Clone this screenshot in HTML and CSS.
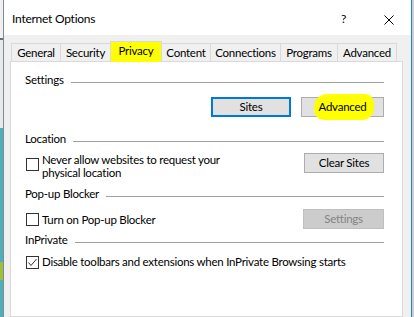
FILE: index.html
```html
<!DOCTYPE html>
<html>
<head>
<meta charset="utf-8">
<link rel="stylesheet" href="styles.css">
</head>
<body>
<div class="screen">
  <div class="bg-left"></div>
  <div class="window">
    <div class="titlebar">
      <span class="title">Internet Options</span>
      <span class="help">?</span>
      <svg class="close" width="10" height="10" viewBox="0 0 10 10"><path d="M0.5 0.5L9.5 9.5M9.5 0.5L0.5 9.5" stroke="#000" stroke-width="1" fill="none"/></svg>
    </div>
    <div class="client">
      <div class="tabs">
        <div class="tab tab-general">General</div>
        <div class="tab tab-security">Security</div>
        <div class="tab tab-privacy selected">Privacy</div>
        <div class="tab tab-content">Content</div>
        <div class="tab tab-connections">Connections</div>
        <div class="tab tab-programs">Programs</div>
        <div class="tab tab-advanced">Advanced</div>
      </div>
      <div class="panel">
        <div class="group-head head-settings"><span>Settings</span><span class="rule"></span></div>
        <div class="btn-row">
          <button class="btn btn-sites default">Sites</button>
          <button class="btn btn-adv"><span class="marker"></span><span class="lbl">Advanced</span></button>
        </div>

        <div class="group-head head-location"><span>Location</span><span class="rule"></span></div>
        <div class="opt-row row-location">
          <label class="check"><span class="box"></span><span class="txt">Never allow websites to request your<br>physical location</span></label>
          <button class="btn">Clear Sites</button>
        </div>

        <div class="group-head head-popup"><span>Pop-up Blocker</span><span class="rule"></span></div>
        <div class="opt-row row-popup">
          <label class="check"><span class="box"></span><span class="txt">Turn on Pop-up Blocker</span></label>
          <button class="btn disabled">Settings</button>
        </div>

        <div class="group-head head-inprivate"><span>InPrivate</span><span class="rule"></span></div>
        <div class="opt-row row-inprivate">
          <label class="check"><span class="box checked"><svg width="11" height="11" viewBox="0 0 11 11"><path d="M1.5 5.5L4 8.5L9.5 2" stroke="#333" stroke-width="1" fill="none"/></svg></span><span class="txt">Disable toolbars and extensions when InPrivate Browsing starts</span></label>
        </div>
      </div>
    </div>
  </div>
  <div class="bg-right"></div>
</div>
</body>
</html>
```
FILE: styles.css
```css
* { box-sizing: border-box; }
html, body { margin: 0; padding: 0; }
body {
  width: 414px;
  height: 317px;
  overflow: hidden;
  font-family: Lato, "Noto Sans", sans-serif;
  font-size: 11.5px;
  letter-spacing: -0.25px;
  color: #000;
}
.screen {
  display: flex;
  width: 414px;
  height: 317px;
}
.bg-left {
  width: 3px;
  background: linear-gradient(to bottom, #f0f0f0 0 38px, #6d6d6d 38px 40px, #e9e9e9 40px 128px, #4cb0b8 128px 262px, #9fbf3a 262px 280px, #4cb0b8 280px 100%);
}
.bg-right {
  width: 2px;
  background: #cfcfcf;
}
.window {
  width: 409px;
  display: flex;
  flex-direction: column;
  border-left: 1px solid #7f8a96;
  border-right: 1px solid #1883d7;
  background: #f0f0f0;
}
.titlebar {
  height: 35px;
  flex: none;
  background: #fff;
  display: flex;
  align-items: flex-start;
  padding: 11px 17px 0 8px;
  line-height: 16px;
}
.title { flex: 1; font-size: 12px; }
.help { margin-right: 38px; font-size: 12px; }
.close { margin-top: 4px; }
.client {
  flex: 1;
  display: flex;
  flex-direction: column;
  padding: 6px 8px 0 6px;
}
.tabs {
  display: flex;
  align-items: flex-end;
  height: 20px;
  padding-left: 1px;
}
.tab {
  height: 18px;
  border: 1px solid #d9d9d9;
  border-bottom: none;
  background: #f0f0f0;
  line-height: 17px;
  text-align: center;
  white-space: nowrap;
  margin-left: -1px;
}
.tab:first-child { margin-left: 0; }
.tab-general { width: 50px; }
.tab-security { width: 51px; }
.tab-privacy { width: 52px; }
.tab-content { width: 50px; }
.tab-connections { width: 71px; }
.tab-programs { width: 58px; }
.tab-advanced { width: 60px; }
.tab.selected {
  height: 21px;
  margin-bottom: -1px;
  position: relative;
  z-index: 1;
  background: #ffff00;
}
.panel {
  flex: 1;
  background: #fff;
  border: 1px solid #d9d9d9;
  padding: 10px 18px 0 14px;
  display: flex;
  flex-direction: column;
}
.group-head {
  display: flex;
  height: 16px;
  line-height: 16px;
  white-space: nowrap;
}
.rule {
  flex: 1;
  height: 1px;
  background: #a0a0a0;
  margin: 10px 0 0 7px;
}
.btn {
  font: inherit;
  letter-spacing: inherit;
  color: #000;
  width: 80px;
  height: 20px;
  padding: 0;
  background: #e1e1e1;
  border: 1px solid #adadad;
  line-height: 18px;
  text-align: center;
  border-radius: 0;
  flex: none;
}
.btn.default {
  border: 2px solid #0078d7;
  line-height: 16px;
}
.btn.disabled {
  background: #cccccc;
  border-color: #bfbfbf;
  color: #838383;
  width: 81px;
}
.btn-row {
  display: flex;
  justify-content: flex-end;
  gap: 10px;
  margin-top: 9px;
}
.btn-adv {
  width: 83px;
  position: relative;
}
.btn-adv .marker {
  position: absolute;
  left: 12px;
  top: -4px;
  width: 60px;
  height: 26px;
  background: #ffff00;
  border-radius: 13px 9px 12px 10px;
}
.btn-adv .lbl { position: relative; }
.head-location { margin-top: 14px; }
.head-popup { margin-top: 7px; }
.head-inprivate { margin-top: 3px; }
.opt-row {
  display: flex;
  justify-content: space-between;
  align-items: flex-start;
}
.row-location { margin-top: 6px; }
.row-popup { margin-top: 7px; align-items: center; }
.row-inprivate { margin-top: 7px; }
.check {
  display: flex;
  align-items: flex-start;
  line-height: 13px;
}
.box {
  width: 13px;
  height: 13px;
  border: 1px solid #333;
  background: #fff;
  margin: 0 3px 0 1px;
  flex: none;
  display: flex;
  align-items: center;
  justify-content: center;
}
.row-location .box { margin-top: 5px; }
.row-popup .check { align-items: center; }
.row-inprivate .box { margin-top: 1px; }
.txt { white-space: nowrap; }
```
